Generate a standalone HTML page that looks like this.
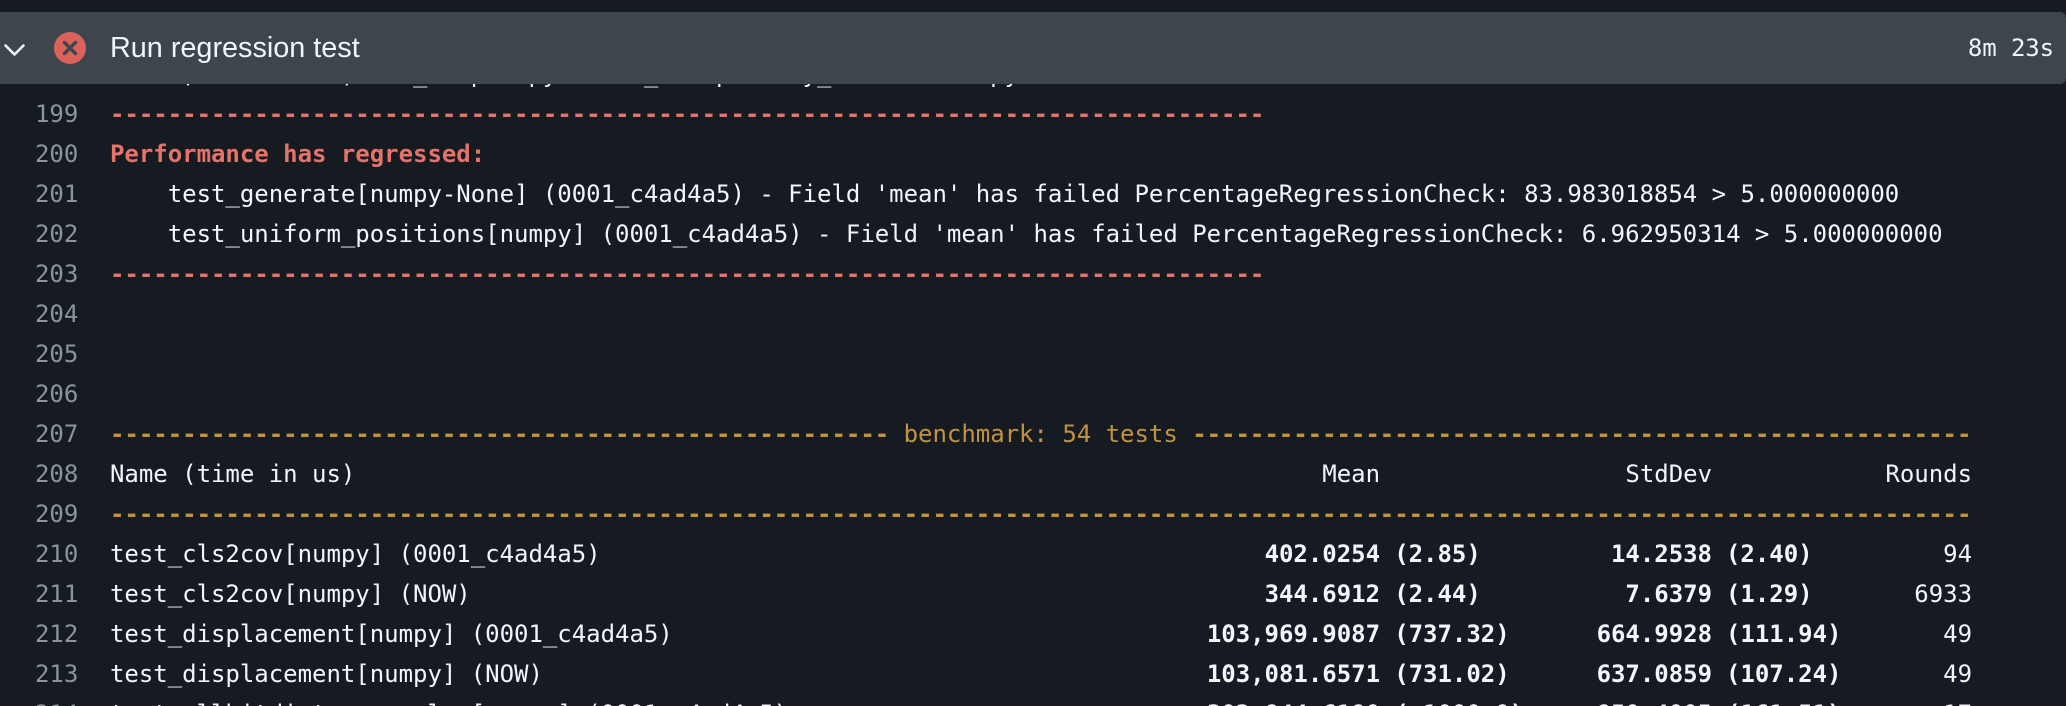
<!DOCTYPE html>
<html lang="en">
<head>
<meta charset="utf-8">
<title>Run regression test</title>
<style>
html,body{margin:0;padding:0;background:#161b22;height:706px;overflow:hidden;}
#wrap{position:relative;width:2066px;height:706px;overflow:hidden;font-family:"DejaVu Sans Mono","Liberation Mono",monospace;font-size:24px;color:#f0f6fc;}
.row{position:absolute;left:0;width:2066px;height:40px;line-height:40px;white-space:pre;letter-spacing:-0.02px;}
.n{position:absolute;left:35px;top:0;color:#8b949e;font-size:24px;}
.t{position:absolute;left:110px;top:0;}
.m{position:absolute;right:686px;top:0;font-weight:bold;}
.mp{position:absolute;left:1394.2px;top:0;font-weight:bold;}
.s{position:absolute;right:354px;top:0;font-weight:bold;}
.sp{position:absolute;left:1726px;top:0;font-weight:bold;}
.r{position:absolute;right:94px;top:0;}
.nb{font-weight:normal;}
.red{color:#e5736a;}
.yel{color:#c2923f;}
.d{font-weight:bold;}
.hd{position:absolute;left:0;top:12px;width:2066px;height:72px;background:#3f454d;border-radius:0 6px 6px 0;z-index:5;}
.title{position:absolute;left:110px;top:0;line-height:72px;font-family:"Liberation Sans",sans-serif;font-size:28.8px;color:#f0f6fc;}
.dur{position:absolute;right:12px;top:0;line-height:72px;color:#f0f6fc;letter-spacing:-0.1px;}
svg{position:absolute;}
</style>
</head>
<body>
<div id="wrap">
<div class="hd">
<svg style="left:0;top:17px" width="30" height="36" viewBox="0 0 30 36"><path d="M5.5 16.5 L14.5 25.5 L23.5 16.5" fill="none" stroke="#f0f6fc" stroke-width="2.6" stroke-linecap="round" stroke-linejoin="round"/></svg>
<svg style="left:54px;top:20px" width="32" height="32" viewBox="0 0 32 32"><circle cx="16" cy="16" r="16" fill="#d9625a"/><path d="M10.5 10.5 L21.5 21.5 M21.5 10.5 L10.5 21.5" fill="none" stroke="#3f454d" stroke-width="3.4" stroke-linecap="round"/></svg>
<div class="title">Run regression test</div>
<div class="dur">8m 23s</div>
</div>

<div class="row" style="top:54px"><span class="t">xxxxx,xxxxxxxxxx,xxxx_xxxpxxxpyxxxxxx_xxxxpxxxxxy_xxxxxxxxxxxpy</span></div>
<div class="row" style="top:94px"><span class="n">199</span><span class="t red d">--------------------------------------------------------------------------------</span></div>
<div class="row" style="top:134px"><span class="n">200</span><span class="t red" style="font-weight:bold">Performance has regressed:</span></div>
<div class="row" style="top:174px"><span class="n">201</span><span class="t">    test_generate[numpy-None] (0001_c4ad4a5) - Field 'mean' has failed PercentageRegressionCheck: 83.983018854 &gt; 5.000000000</span></div>
<div class="row" style="top:214px"><span class="n">202</span><span class="t">    test_uniform_positions[numpy] (0001_c4ad4a5) - Field 'mean' has failed PercentageRegressionCheck: 6.962950314 &gt; 5.000000000</span></div>
<div class="row" style="top:254px"><span class="n">203</span><span class="t red d">--------------------------------------------------------------------------------</span></div>
<div class="row" style="top:294px"><span class="n">204</span></div>
<div class="row" style="top:334px"><span class="n">205</span></div>
<div class="row" style="top:374px"><span class="n">206</span></div>
<div class="row" style="top:414px"><span class="n">207</span><span class="t yel"><span class="d">------------------------------------------------------</span> benchmark: 54 tests <span class="d">------------------------------------------------------</span></span></div>
<div class="row" style="top:454px"><span class="n">208</span><span class="t">Name (time in us)</span><span class="m nb">Mean</span><span class="s nb">StdDev</span><span class="r">Rounds</span></div>
<div class="row" style="top:494px"><span class="n">209</span><span class="t yel d">---------------------------------------------------------------------------------------------------------------------------------</span></div>
<div class="row" style="top:534px"><span class="n">210</span><span class="t">test_cls2cov[numpy] (0001_c4ad4a5)</span><span class="m">402.0254</span><span class="mp">(2.85)</span><span class="s">14.2538</span><span class="sp">(2.40)</span><span class="r">94</span></div>
<div class="row" style="top:574px"><span class="n">211</span><span class="t">test_cls2cov[numpy] (NOW)</span><span class="m">344.6912</span><span class="mp">(2.44)</span><span class="s">7.6379</span><span class="sp">(1.29)</span><span class="r">6933</span></div>
<div class="row" style="top:614px"><span class="n">212</span><span class="t">test_displacement[numpy] (0001_c4ad4a5)</span><span class="m">103,969.9087</span><span class="mp">(737.32)</span><span class="s">664.9928</span><span class="sp">(111.94)</span><span class="r">49</span></div>
<div class="row" style="top:654px"><span class="n">213</span><span class="t">test_displacement[numpy] (NOW)</span><span class="m">103,081.6571</span><span class="mp">(731.02)</span><span class="s">637.0859</span><span class="sp">(107.24)</span><span class="r">49</span></div>
<div class="row" style="top:694px"><span class="n">214</span><span class="t">test_allbitdistvs_sampler[numpy] (0001_c4ad4a5)</span><span class="m">302,844.6180</span><span class="mp">(&gt;1000.0)</span><span class="s">850.4005</span><span class="sp">(161.51)</span><span class="r">17</span></div>
</div>
</body>
</html>
